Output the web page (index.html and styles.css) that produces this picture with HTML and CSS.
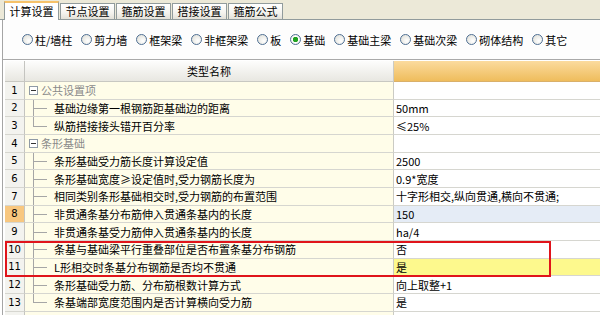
FILE: index.html
```html
<!DOCTYPE html>
<html lang="zh-CN">
<head>
    <meta charset="UTF-8">
    <title>计算设置</title>
    <link rel="stylesheet" href="styles.css">
</head>
<body>
    <div class="tabs">
        <div class="tab active">计算设置</div>
        <div class="tab">节点设置</div>
        <div class="tab">箍筋设置</div>
        <div class="tab">搭接设置</div>
        <div class="tab">箍筋公式</div>
    </div>

    <div class="panel">
        <div class="radios">
            <label class="radio"><span class="dot"></span>柱/墙柱</label>
            <label class="radio"><span class="dot"></span>剪力墙</label>
            <label class="radio"><span class="dot"></span>框架梁</label>
            <label class="radio"><span class="dot"></span>非框架梁</label>
            <label class="radio"><span class="dot"></span>板</label>
            <label class="radio"><span class="dot on"></span>基础</label>
            <label class="radio"><span class="dot"></span>基础主梁</label>
            <label class="radio"><span class="dot"></span>基础次梁</label>
            <label class="radio"><span class="dot"></span>砌体结构</label>
            <label class="radio"><span class="dot"></span>其它</label>
        </div>

        <div class="table">
            <div class="row head">
                <div class="num"></div>
                <div class="name">类型名称</div>
                <div class="val"></div>
            </div>
            <div class="row group">
                <div class="num">1</div>
                <div class="name"><span class="fold"></span>公共设置项</div>
                <div class="val"></div>
            </div>
            <div class="row">
                <div class="num">2</div>
                <div class="name"><span class="branch"></span>基础边缘第一根钢筋距基础边的距离</div>
                <div class="val">50mm</div>
            </div>
            <div class="row">
                <div class="num">3</div>
                <div class="name"><span class="branch last"></span>纵筋搭接接头错开百分率</div>
                <div class="val">≤25%</div>
            </div>
            <div class="row group">
                <div class="num">4</div>
                <div class="name"><span class="fold"></span>条形基础</div>
                <div class="val"></div>
            </div>
            <div class="row">
                <div class="num">5</div>
                <div class="name"><span class="branch"></span>条形基础受力筋长度计算设定值</div>
                <div class="val">2500</div>
            </div>
            <div class="row">
                <div class="num">6</div>
                <div class="name"><span class="branch"></span>条形基础宽度≥设定值时,受力钢筋长度为</div>
                <div class="val">0.9*宽度</div>
            </div>
            <div class="row">
                <div class="num">7</div>
                <div class="name"><span class="branch"></span>相同类别条形基础相交时,受力钢筋的布置范围</div>
                <div class="val">十字形相交,纵向贯通,横向不贯通;</div>
            </div>
            <div class="row selected">
                <div class="num">8</div>
                <div class="name"><span class="branch"></span>非贯通条基分布筋伸入贯通条基内的长度</div>
                <div class="val">150</div>
            </div>
            <div class="row">
                <div class="num">9</div>
                <div class="name"><span class="branch"></span>非贯通条基受力筋伸入贯通条基内的长度</div>
                <div class="val">ha/4</div>
            </div>
            <div class="row">
                <div class="num">10</div>
                <div class="name"><span class="branch"></span>条基与基础梁平行重叠部位是否布置条基分布钢筋</div>
                <div class="val">否</div>
            </div>
            <div class="row edited">
                <div class="num">11</div>
                <div class="name"><span class="branch"></span>L形相交时条基分布钢筋是否均不贯通</div>
                <div class="val">是</div>
            </div>
            <div class="row">
                <div class="num">12</div>
                <div class="name"><span class="branch"></span>条形基础受力筋、分布筋根数计算方式</div>
                <div class="val">向上取整+1</div>
            </div>
            <div class="row">
                <div class="num">13</div>
                <div class="name"><span class="branch last"></span>条基端部宽度范围内是否计算横向受力筋</div>
                <div class="val">是</div>
            </div>
            <div class="row group">
                <div class="num">14</div>
                <div class="name"><span class="fold"></span>独立基础</div>
                <div class="val"></div>
            </div>

            <!-- highlight over rows 10 and 11 -->
            <div class="mark"></div>
        </div>
    </div>
</body>
</html>
```

FILE: styles.css
```css
body {
    margin: 0;
    font-family: "Noto Sans CJK SC", "Noto Sans", sans-serif;
    font-size: 11px;
    color: #000;
    background-color: #fff;
    overflow: hidden;
}

/* Tab strip */
.tabs {
    height: 20px;
    box-sizing: border-box;
    background-color: #ece9d8;
    border-bottom: 1px solid #919b9c;
    display: flex;
    align-items: flex-end;
    padding-left: 4px;
}

.tab {
    width: 55px;
    height: 16px;
    box-sizing: border-box;
    border: 1px solid #919b9c;
    border-bottom: none;
    margin-right: 1px;
    background: linear-gradient(#ffffff, #f4f3ee 60%, #e3e1d8);
    text-align: center;
    line-height: 14px;
}

.tab.active {
    height: 19px;
    margin-bottom: -1px;
    background: #fff;
    border-top: 2px solid #f6c26a;
    line-height: 16px;
}

/* Panel */
.panel {
    margin-left: 2px;
    border-left: 1px solid #a5a5a5;
}

.radios {
    height: 40px;
    box-sizing: border-box;
    display: flex;
    align-items: center;
    gap: 9px;
    padding-left: 19px;
    border-bottom: 1px solid #a9a9a9;
    background-color: #fdfdfd;
}

.radio {
    display: flex;
    align-items: center;
    gap: 2px;
}

.dot {
    width: 11px;
    height: 11px;
    box-sizing: border-box;
    border-radius: 50%;
    border: 1px solid #4f6f93;
    background: radial-gradient(circle at 65% 65%, #ffffff, #dcdcd4);
}

.dot.on {
    background: radial-gradient(circle, #22a322 0 2.5px, #ffffff 3px, #dcdcd4);
}

/* Grid table */
.table {
    position: relative;
    margin-left: 2px;
    margin-top: 1px;
}

.row {
    display: grid;
    grid-template-columns: 20px 369px 1fr;
    height: 17.67px;
}

.row > div {
    box-sizing: border-box;
    border-bottom: 1px solid #d6d6d0;
    display: flex;
    align-items: center;
    white-space: nowrap;
    overflow: hidden;
}

.num {
    justify-content: center;
    font-family: "DejaVu Sans", sans-serif;
    font-size: 10px;
    background-color: #f3f3ef;
    border-right: 1px solid #c4c4c0;
}

.name {
    background-color: #fffde9;
    border-right: 1px solid #cbcbc4;
}

.val {
    background-color: #fff;
    padding-left: 2px;
}

.row.head {
    height: 21px;
}

.row.head .num,
.row.head .name {
    background: linear-gradient(#fdfdfc, #e8e7e1);
    border-bottom-color: #c8c8c2;
}

.row.head .name {
    justify-content: center;
}

.row.head .val {
    background: linear-gradient(#fbdb9e, #efbd5c);
    border-bottom-color: #d9b06a;
}

.row.group .name {
    color: #8a8a8a;
}

.row.selected .num {
    background-color: #f8c77f;
}

.row.selected .val {
    background-color: #e5ecf6;
}

.row.edited .val {
    background-color: #fdf98d;
}

/* Tree marks */
.fold {
    position: relative;
    width: 9px;
    height: 9px;
    box-sizing: border-box;
    border: 1px solid #8f9aa6;
    background-color: #fff;
    margin-left: 4px;
    margin-right: 3px;
}

.fold::after {
    content: '';
    position: absolute;
    left: 1px;
    right: 1px;
    top: 3px;
    border-top: 1px solid #333;
}

.branch {
    position: relative;
    align-self: stretch;
    width: 14px;
    margin-left: 8px;
    margin-right: 7px;
}

.branch::before {
    content: '';
    position: absolute;
    left: 0;
    top: 0;
    bottom: -1px;
    border-left: 1px solid #a6a6a6;
}

.branch.last::before {
    bottom: 50%;
}

.branch::after {
    content: '';
    position: absolute;
    left: 0;
    right: 0;
    top: 50%;
    border-top: 1px solid #a6a6a6;
}

.mark {
    position: absolute;
    left: 0;
    top: 180px;
    width: 546px;
    height: 36px;
    box-sizing: border-box;
    border: 2px solid #e0141b;
    pointer-events: none;
}
```
